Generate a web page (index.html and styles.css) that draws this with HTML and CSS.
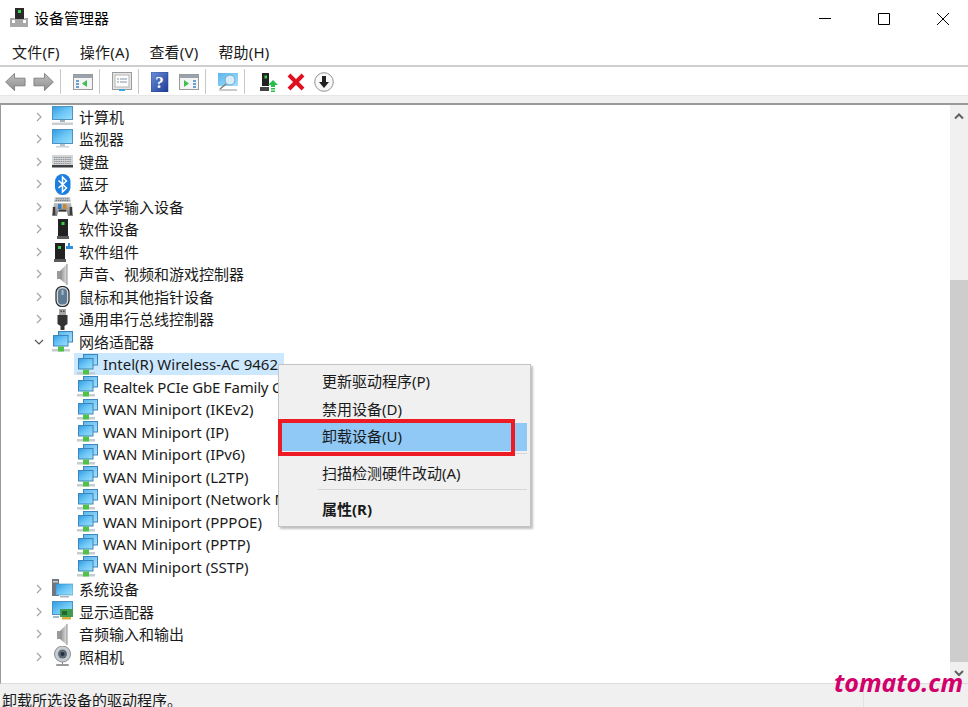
FILE: index.html
```html
<!DOCTYPE html>
<html lang="zh-CN">
<head>
<meta charset="utf-8">
<title>设备管理器</title>
<link rel="stylesheet" href="styles.css">
</head>
<body>
<svg class="defs" aria-hidden="true">
  <defs>
    <linearGradient id="sky" x1="0" y1="0" x2="1" y2="1"><stop offset="0" stop-color="#2f9ae0"/><stop offset=".5" stop-color="#6cc6f6"/><stop offset="1" stop-color="#9ee0fb"/></linearGradient>
    <linearGradient id="sky2" x1="0" y1="0" x2="1" y2="1"><stop offset="0" stop-color="#5ab6ee"/><stop offset="1" stop-color="#a6e0fb"/></linearGradient>
    <linearGradient id="grey" x1="0" y1="0" x2="0" y2="1"><stop offset="0" stop-color="#c4c4c4"/><stop offset="1" stop-color="#7c7c7c"/></linearGradient>
    <linearGradient id="cone" x1="0" y1="0" x2="1" y2="0"><stop offset="0" stop-color="#8a8a8a"/><stop offset="1" stop-color="#e2e2e2"/></linearGradient>
    <linearGradient id="blueq" x1="0" y1="0" x2="1" y2="1"><stop offset="0" stop-color="#6d8fd8"/><stop offset="1" stop-color="#1c3d95"/></linearGradient>
    <linearGradient id="arrow" x1="0" y1="0" x2="0" y2="1"><stop offset="0" stop-color="#c0c0c0"/><stop offset="1" stop-color="#8e8e8e"/></linearGradient>

    <symbol id="i-monitor" viewBox="0 0 21 21">
      <rect x="0.500" y="0.500" width="20" height="14" fill="url(#sky)" stroke="#4f93c4"/>
      <rect x="8" y="15" width="5" height="2" fill="#b4c4cf"/>
      <rect x="4" y="17" width="13" height="1.500" fill="#c8d2d8"/>
    </symbol>
    <symbol id="i-computer" viewBox="0 0 21 21">
      <rect x="0.500" y="0.500" width="20" height="13" fill="url(#sky)" stroke="#4f93c4"/>
      <rect x="8" y="14" width="5" height="2" fill="#9fb2be"/>
      <rect x="0" y="16.500" width="21" height="2.500" fill="#c9ced1"/>
    </symbol>
    <symbol id="i-keyboard" viewBox="0 0 21 21">
      <rect x="0" y="4" width="21" height="12" fill="#d2d4d6"/>
      <path d="M2 6.500h17M2 8.500h17M2 10.500h17M2 12.500h17" stroke="#8f9498" stroke-width="1" stroke-dasharray="1.500 .7"/>
      <rect x="0" y="14" width="21" height="2.500" fill="#3d3f42"/>
    </symbol>
    <symbol id="i-bt" viewBox="0 0 21 21">
      <rect x="3" y="0" width="15.500" height="21" rx="7.500" fill="#1b7fe0"/>
      <path d="M6.500 6.500l8 7.500-4 4V3l4 4-8 7" fill="none" stroke="#fff" stroke-width="1.500"/>
    </symbol>
    <symbol id="i-hid" viewBox="0 0 21 21">
      <path d="M3 1h15l1 5H2z" fill="#c7cbce"/>
      <path d="M4 2.800h13M3.500 4.600h14" stroke="#6f7478" stroke-dasharray="1.500 .7"/>
      <path d="M2 7h17l2 13h-5l-1-4H6l-1 4H0z" fill="url(#grey)"/>
      <rect x="6" y="8" width="3.500" height="5" fill="#2f80c8"/>
      <rect x="11" y="8" width="3.500" height="5" fill="#c88a30"/>
      <path d="M7 14.500h7" stroke="#333" stroke-width="1.500"/>
      <path d="M2 11v8M19 11v8" stroke="#3a3a3a" stroke-width="2.500"/>
    </symbol>
    <symbol id="i-device" viewBox="0 0 21 21">
      <path d="M6 0h10v17H6z" fill="#222"/>
      <path d="M5 17h12v3H5z" fill="#5b5b5b"/>
      <rect x="9.500" y="3" width="3" height="3" fill="#37d24a"/>
    </symbol>
    <symbol id="i-component" viewBox="0 0 21 21">
      <path d="M3 2h10v16H3z" fill="#222"/>
      <path d="M2 18h12v3H2z" fill="#5b5b5b"/>
      <rect x="6" y="5" width="3" height="3" fill="#37d24a"/>
      <path d="M14 5h2V2h2v3h3v3h-7z" fill="#2f8fdc"/>
    </symbol>
    <symbol id="i-speaker" viewBox="0 0 21 21">
      <path d="M5 7h4v8H5z" fill="#9a9a9a"/>
      <path d="M8 7l7-7v21l-7-6z" fill="url(#cone)"/>
      <path d="M15 0v21" stroke="#8b8b8b"/>
    </symbol>
    <symbol id="i-mouse" viewBox="0 0 21 21">
      <rect x="4" y="0.500" width="13" height="20" rx="6" fill="#d4d8db" stroke="#25292d" stroke-width="1.200"/>
      <rect x="6" y="2.500" width="9" height="16" rx="4" fill="#5f7b94"/>
      <rect x="9.500" y="4" width="2" height="5" fill="#a9bac8"/>
    </symbol>
    <symbol id="i-usb" viewBox="0 0 21 21">
      <rect x="7" y="0" width="7" height="6" fill="#a6a6a6"/>
      <rect x="8.500" y="1.500" width="1.500" height="1.500" fill="#444"/>
      <rect x="11" y="1.500" width="1.500" height="1.500" fill="#444"/>
      <path d="M5.500 6h10v9l-3 2v4h-4v-4l-3-2z" fill="#333"/>
    </symbol>
    <symbol id="i-net" viewBox="0 0 21 21">
      <rect x="6.500" y="0.500" width="14" height="10.500" fill="url(#sky2)" stroke="#3d85bd"/>
      <rect x="1.500" y="4.500" width="14.500" height="10.500" fill="url(#sky)" stroke="#3d85bd"/>
      <rect x="0" y="18" width="18" height="2.500" fill="#c6ccd0"/>
      <rect x="6" y="15.500" width="6" height="5" fill="#4fc24a"/>
    </symbol>
    <symbol id="i-system" viewBox="0 0 21 21">
      <rect x="0" y="0" width="7" height="17" fill="#70767b"/>
      <rect x="1" y="2" width="5" height="1.500" fill="#d0d0d0"/>
      <rect x="4" y="5" width="17" height="11" fill="url(#sky)" stroke="#4a8ebd" stroke-width=".6"/>
      <rect x="8" y="17" width="9" height="1.500" fill="#a8b6bf"/>
    </symbol>
    <symbol id="i-display" viewBox="0 0 21 21">
      <rect x="0.500" y="0.500" width="20" height="13" fill="url(#sky)" stroke="#4f93c4"/>
      <path d="M1 15h6v2H1z" fill="#aab8c2"/>
      <rect x="8" y="8" width="13" height="8" fill="#3f9a52"/>
      <rect x="10" y="10" width="5" height="4" fill="#22682f"/>
      <rect x="10" y="16" width="9" height="2.500" fill="#d8ae38"/>
    </symbol>
    <symbol id="i-camera" viewBox="0 0 21 21">
      <circle cx="10.500" cy="8" r="8" fill="#c9cccf" stroke="#8b8f93"/>
      <circle cx="10.500" cy="8" r="4.500" fill="#5b6a7a"/>
      <circle cx="10.500" cy="8" r="2" fill="#25303a"/>
      <path d="M10 16h1v2h-1z" fill="#888"/>
      <rect x="4" y="18" width="13" height="2" rx="1" fill="#9a9a9a"/>
    </symbol>
  </defs>
</svg>

<div class="window">
  <header class="titlebar">
    <svg class="app-icon" viewBox="0 0 20 20" width="20" height="20">
      <path d="M6 0h9v11H6z" fill="#2a2a2a"/>
      <rect x="9" y="2" width="3" height="3" fill="#37d24a"/>
      <path d="M1 10h4l1 1h9l1-1h3v9H1z" fill="#a8a8a8"/>
      <rect x="3" y="12" width="3" height="3" fill="#fff"/>
      <rect x="14" y="12" width="3" height="3" fill="#fff"/>
    </svg>
    <span class="app-title">设备管理器</span>
    <div class="controls">
      <svg class="ctl" viewBox="0 0 12 12" width="12" height="12"><path d="M0 5.500h12" stroke="#000"/></svg>
      <svg class="ctl" viewBox="0 0 12 12" width="12" height="12"><path d="M.5.500h11v11H.5z" fill="none" stroke="#000"/></svg>
      <svg class="ctl" viewBox="0 0 12 12" width="12" height="12"><path d="M0 0l12 12M12 0L0 12" stroke="#000" fill="none"/></svg>
    </div>
  </header>

  <nav class="menubar">
    <span>文件(F)</span><span>操作(A)</span><span>查看(V)</span><span>帮助(H)</span>
  </nav>

  <div class="toolbar">
    <svg class="tb w22" viewBox="0 0 22 20"><path d="M.7 10L10 1v5h11v8H10v5z" fill="url(#arrow)" stroke="#808080"/></svg>
    <svg class="tb w22 gap8" viewBox="0 0 22 20"><path d="M21.300 10L12 1v5H1v8h11v5z" fill="url(#arrow)" stroke="#808080"/></svg>
    <i class="sep"></i>
    <svg class="tb w20" viewBox="0 0 20 20"><rect x=".5" y="2.500" width="19" height="15" fill="#f4f4f4" stroke="#9a9a9a"/><rect x="1" y="3" width="18" height="3" fill="#9aa3ad"/><path d="M3 8h3v2H3zM3 11h3v2H3zM3 14h3v2H3z" fill="#6a9fd0"/><path d="M14 8v7l-5-3.500z" fill="#3fbf4f"/></svg>
    <i class="sep"></i>
    <svg class="tb w20" viewBox="0 0 20 20"><rect x=".5" y=".5" width="19" height="17" fill="#e6e6e6" stroke="#9a9a9a"/><rect x="3" y="3" width="14" height="12" fill="#fdfdfd" stroke="#b5b5b5"/><path d="M5 7h2M8 7h7M5 10h2M8 10h7" stroke="#7f95ab"/><rect x="7" y="17" width="6" height="2" fill="#41a5dd"/></svg>
    <i class="sep"></i>
    <svg class="tb w18" viewBox="0 0 18 20"><rect x="0" y="0" width="17" height="20" fill="url(#blueq)" stroke="#1c3d95" stroke-width=".5"/><text x="8.500" y="16" text-anchor="middle" class="q">?</text></svg>
    <svg class="tb w20 left10" viewBox="0 0 20 20"><rect x=".5" y="2.500" width="19" height="15" fill="#f4f4f4" stroke="#9a9a9a"/><rect x="1" y="3" width="18" height="3" fill="#9aa3ad"/><path d="M14 8h3v2h-3zM14 11h3v2h-3zM14 14h3v2h-3z" fill="#6a9fd0"/><path d="M5 8v7l5-3.500z" fill="#3fbf4f"/></svg>
    <i class="sep"></i>
    <svg class="tb w20" viewBox="0 0 20 20"><rect x="0" y="1" width="20" height="13" fill="url(#sky2)"/><circle cx="12" cy="8" r="5" fill="#d6eefb" stroke="#7aa7c4"/><path d="M8 12l-6 5" stroke="#7d7d7d" stroke-width="1.500"/><path d="M1 18h18" stroke="#b8b8b8" stroke-width="1.500"/></svg>
    <i class="sep"></i>
    <svg class="tb w18 left3" viewBox="0 0 18 20"><path d="M2 1h7v13H2z" fill="#222"/><rect x="4.500" y="3.500" width="2.500" height="3" fill="#37d24a"/><path d="M0 15h9v4H0z" fill="#444"/><path d="M13 8l5 5h-3v2h-4v-2H8z" fill="#27c04a"/><path d="M11 16h4v1.500h-4zM11 18.500h4V20h-4z" fill="#27c04a"/></svg>
    <svg class="tb w18 left9" viewBox="0 0 18 18"><path d="M2 2l14 14M16 2L2 16" stroke="#df1020" stroke-width="4"/></svg>
    <svg class="tb w20 left9" viewBox="0 0 20 20"><circle cx="10" cy="10" r="9.300" fill="#f8f8f8" stroke="#909090"/><path d="M8 4h4v6h3l-5 6-5-6h3z" fill="#222"/></svg>
  </div>
  <div class="strip"></div>

  <main class="main">
    <div class="tree">
      <div class="row"><svg class="chev"><path d="M4 2l4 4-4 4"/></svg><svg class="ic"><use href="#i-computer"/></svg><span>计算机</span></div>
      <div class="row"><svg class="chev"><path d="M4 2l4 4-4 4"/></svg><svg class="ic"><use href="#i-monitor"/></svg><span>监视器</span></div>
      <div class="row"><svg class="chev"><path d="M4 2l4 4-4 4"/></svg><svg class="ic"><use href="#i-keyboard"/></svg><span>键盘</span></div>
      <div class="row"><svg class="chev"><path d="M4 2l4 4-4 4"/></svg><svg class="ic"><use href="#i-bt"/></svg><span>蓝牙</span></div>
      <div class="row"><svg class="chev"><path d="M4 2l4 4-4 4"/></svg><svg class="ic"><use href="#i-hid"/></svg><span>人体学输入设备</span></div>
      <div class="row"><svg class="chev"><path d="M4 2l4 4-4 4"/></svg><svg class="ic"><use href="#i-device"/></svg><span>软件设备</span></div>
      <div class="row"><svg class="chev"><path d="M4 2l4 4-4 4"/></svg><svg class="ic"><use href="#i-component"/></svg><span>软件组件</span></div>
      <div class="row"><svg class="chev"><path d="M4 2l4 4-4 4"/></svg><svg class="ic"><use href="#i-speaker"/></svg><span>声音、视频和游戏控制器</span></div>
      <div class="row"><svg class="chev"><path d="M4 2l4 4-4 4"/></svg><svg class="ic"><use href="#i-mouse"/></svg><span>鼠标和其他指针设备</span></div>
      <div class="row"><svg class="chev"><path d="M4 2l4 4-4 4"/></svg><svg class="ic"><use href="#i-usb"/></svg><span>通用串行总线控制器</span></div>
      <div class="row"><svg class="chev open"><path d="M2 4l4 4 4-4"/></svg><svg class="ic"><use href="#i-net"/></svg><span>网络适配器</span></div>
      <div class="row child selected"><svg class="ic"><use href="#i-net"/></svg><span>Intel(R) Wireless-AC 9462</span></div>
      <div class="row child tight"><svg class="ic"><use href="#i-net"/></svg><span>Realtek PCIe GbE Family Controller</span></div>
      <div class="row child"><svg class="ic"><use href="#i-net"/></svg><span>WAN Miniport (IKEv2)</span></div>
      <div class="row child"><svg class="ic"><use href="#i-net"/></svg><span>WAN Miniport (IP)</span></div>
      <div class="row child"><svg class="ic"><use href="#i-net"/></svg><span>WAN Miniport (IPv6)</span></div>
      <div class="row child"><svg class="ic"><use href="#i-net"/></svg><span>WAN Miniport (L2TP)</span></div>
      <div class="row child"><svg class="ic"><use href="#i-net"/></svg><span>WAN Miniport (Network Monitor)</span></div>
      <div class="row child"><svg class="ic"><use href="#i-net"/></svg><span>WAN Miniport (PPPOE)</span></div>
      <div class="row child"><svg class="ic"><use href="#i-net"/></svg><span>WAN Miniport (PPTP)</span></div>
      <div class="row child"><svg class="ic"><use href="#i-net"/></svg><span>WAN Miniport (SSTP)</span></div>
      <div class="row"><svg class="chev"><path d="M4 2l4 4-4 4"/></svg><svg class="ic"><use href="#i-system"/></svg><span>系统设备</span></div>
      <div class="row"><svg class="chev"><path d="M4 2l4 4-4 4"/></svg><svg class="ic"><use href="#i-display"/></svg><span>显示适配器</span></div>
      <div class="row"><svg class="chev"><path d="M4 2l4 4-4 4"/></svg><svg class="ic"><use href="#i-speaker"/></svg><span>音频输入和输出</span></div>
      <div class="row"><svg class="chev"><path d="M4 2l4 4-4 4"/></svg><svg class="ic"><use href="#i-camera"/></svg><span>照相机</span></div>
    </div>
    <div class="scrollbar">
      <svg class="sb-arrow" viewBox="0 0 18 18"><path d="M5 13.500l4-4 4 4"/></svg>
      <div class="sb-track"><div class="sb-thumb"></div></div>
      <svg class="sb-arrow" viewBox="0 0 18 18"><path d="M5 6l4 4 4-4"/></svg>
    </div>

    <div class="menu">
      <div class="mi first">更新驱动程序(P)</div>
      <div class="mi">禁用设备(D)</div>
      <div class="mi hot">卸载设备(U)</div>
      <div class="msep"></div>
      <div class="mi">扫描检测硬件改动(A)</div>
      <div class="msep"></div>
      <div class="mi strong">属性(R)</div>
      <div class="redbox"></div>
    </div>
  </main>

  <footer class="status">
    <span class="status-text">卸载所选设备的驱动程序。</span>
    <i class="status-div"></i>
  </footer>
  <div class="mark">tomato.cm</div>
</div>
</body>
</html>
```
FILE: styles.css
```css
* { box-sizing: border-box; }
html, body { margin: 0; padding: 0; height: 707px; overflow: hidden; background: #fff; }
body { font: 15px/20px "Noto Sans", "Noto Sans CJK SC", sans-serif; color: #1a1a1a; }
.defs { position: absolute; width: 0; height: 0; }

.window { position: relative; width: 968px; height: 707px; display: flex; flex-direction: column; overflow: hidden; }

.titlebar { height: 37px; display: flex; align-items: center; padding-left: 9px; flex: none; color: #000; }
.app-icon { display: block; margin-right: 5px; margin-bottom: 2px; }
.app-title { margin-bottom: 2px; }
.controls { margin-left: auto; display: flex; gap: 47px; padding-right: 19px; }
.ctl { display: block; }

.menubar { height: 30px; flex: none; display: flex; gap: 20px; padding: 5px 0 0 12px; border-bottom: 2px solid #cfcfcf; letter-spacing: .2px; }

.toolbar { height: 28px; flex: none; display: flex; align-items: center; padding: 1px 0 0 5px; }
.tb { display: block; height: 20px; flex: none; }
.w22 { width: 21px; }
.w20 { width: 20px; }
.w18 { width: 18px; }
.gap8 { margin-left: 7px; }
.left10 { margin-left: 10px; }
.left9 { margin-left: 9px; }
.left3 { margin-left: 3px; }
.sep { display: block; width: 1px; height: 25px; background: #c8c8c8; margin: 0 12px 0 6px; flex: none; }
.q { font: bold 17px "Liberation Serif", serif; fill: #fff; }

.strip { height: 8px; flex: none; background: #f0f0f0; border-top: 1px solid #e6e6e6; }

.main { position: relative; flex: 1; min-height: 0; display: flex; border-top: 2px solid #9b9b9b; border-left: 1px solid #9b9b9b; border-bottom: 1px solid #dcdcdc; }
.tree { flex: 1; min-width: 0; padding-top: .25px; overflow: hidden; }
.row { height: 22.5px; display: flex; align-items: center; padding-left: 32px; white-space: nowrap; }
.chev { width: 12px; height: 12px; flex: none; margin-right: 7px; fill: none; stroke: #a6a6a6; stroke-width: 1.2px; }
.chev.open { stroke: #555; }
.ic { width: 21px; height: 21px; flex: none; margin-right: 6px; }
.child { padding-left: 0; margin-left: 73px; }
.child > .ic { margin-left: 3px; margin-right: 5px; }
.selected { width: 210px; background: #cce8ff; }
.tight { letter-spacing: -.2px; }

.scrollbar { width: 18px; flex: none; display: flex; flex-direction: column; background: #f0f0f0; }
.sb-arrow { width: 18px; height: 18px; flex: none; fill: none; stroke: #606060; stroke-width: 2px; }
.sb-track { flex: 1; padding-top: 157px; }
.sb-thumb { height: 382px; background: #cdcdcd; }

.menu { position: absolute; left: 277px; top: 259px; width: 253px; height: 163px; background: #f0f0f0; border: 1px solid #c4c4c4; box-shadow: 2px 2px 2px rgba(0,0,0,.25); padding: 3px; }
.mi { height: 27px; line-height: 26px; padding-left: 40px; color: #1a1a1a; }
.first { height: 28px; line-height: 27px; }
.hot { height: 28px; line-height: 27px; background: #90c8f6; }
.strong { font-weight: 700; }
.msep { height: 1px; background: #d6d6d6; margin: 2px 0 6px 36px; }
.redbox { position: absolute; left: -1px; top: 54px; width: 237px; height: 37px; border: 4px solid #ed1c24; }

.status { height: 23px; flex: none; position: relative; background: #f0f0f0; overflow: hidden; padding: 6px 0 0 2px; }
.status-text { display: block; line-height: 20px; }
.status-div { position: absolute; left: 863px; top: 0; width: 1px; height: 23px; background: #e2e2e2; }

.mark { position: absolute; left: 834px; top: 665px; font: italic 700 25px/34px "Open Sans", sans-serif; color: #d1006b; }
```
